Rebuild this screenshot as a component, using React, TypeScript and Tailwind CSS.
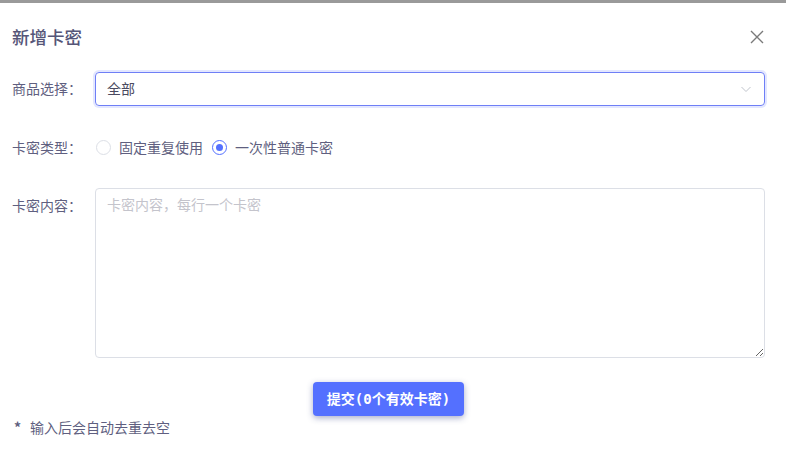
import React from "react";

export default function App() {
  const font = { fontFamily: '"Noto Sans CJK SC", "Noto Sans", sans-serif' };
  return (
    <div className="w-[786px] h-[456px] bg-white overflow-hidden" style={font}>
      <div className="h-[3px] bg-[#9a9a9a]" />
      <div className="flex items-center justify-between pl-3 pr-[22px] pt-[22px]">
        <div className="text-[17.5px] leading-[24px] font-medium text-[#555578]">新增卡密</div>
        <svg width="14" height="14" viewBox="0 0 14 14" className="text-[#7a7a7a]">
          <path d="M1 1 L13 13 M13 1 L1 13" stroke="currentColor" strokeWidth="1.4" fill="none" />
        </svg>
      </div>
      <div className="pl-3 pr-[21px] pt-[23px]">
        <div className="flex items-center h-[34px]">
          <div className="w-[83px] text-[14px] leading-[20px] -mt-[2px] text-[#5f5f80]">商品选择：</div>
          <div className="flex-1 h-[34px] flex items-center justify-between pl-[11px] pr-[12px] rounded-[4px] border border-[#6f7ff6] ring-[2px] ring-[#e3e7ff]">
            <span className="text-[14px] leading-[20px] -mt-[2px] text-[#4a4a60]">全部</span>
            <svg width="12" height="12" viewBox="0 0 12 12" className="text-[#c0c4cc]">
              <path d="M1.5 4 L6 8.5 L10.5 4" stroke="currentColor" strokeWidth="1" fill="none" />
            </svg>
          </div>
        </div>
        <div className="flex items-center h-[34px] mt-6">
          <div className="w-[84px] text-[14px] leading-[20px] -mt-[1px] text-[#5f5f80]">卡密类型：</div>
          <div className="flex items-center">
            <span className="w-[15px] h-[15px] rounded-full border border-[#dcdfe6] bg-white" />
            <span className="ml-[8px] text-[14px] leading-[20px] -mt-[1px] text-[#5f5f80]">固定重复使用</span>
            <span className="ml-[9px] w-[15px] h-[15px] rounded-full border border-[#5470ff] bg-white flex items-center justify-center">
              <span className="w-[7px] h-[7px] rounded-full bg-[#5470ff]" />
            </span>
            <span className="ml-[8px] text-[14px] leading-[20px] -mt-[1px] text-[#5f5f80]">一次性普通卡密</span>
          </div>
        </div>
        <div className="flex mt-6">
          <div className="w-[83px] text-[14px] leading-[34px] text-[#5f5f80]">卡密内容：</div>
          <textarea
            className="flex-1 h-[170px] rounded-[4px] border border-[#dcdfe6] px-[11px] py-[4px] text-[14px] leading-[22px] outline-none resize-y placeholder:text-[#c4c4cc]"
            placeholder="卡密内容，每行一个卡密"
            style={font}
          />
        </div>
        <div className="pl-[301px] mt-6">
          <button
            className="h-[34px] w-[151px] rounded-[4px] bg-[#5470ff] text-white text-[14px] font-bold shadow-[0_2px_6px_rgba(60,70,140,0.45)]"
            style={{ fontFamily: '"DejaVu Sans Mono", "Noto Sans CJK SC", monospace' }}
          >
            提交(0个有效卡密)
          </button>
        </div>
        <div className="mt-[1px] text-[14px] leading-[20px] text-[#5f5f80]">
          <span className="ml-[2px] mr-[9px] font-bold">*</span>输入后会自动去重去空
        </div>
      </div>
    </div>
  );
}
